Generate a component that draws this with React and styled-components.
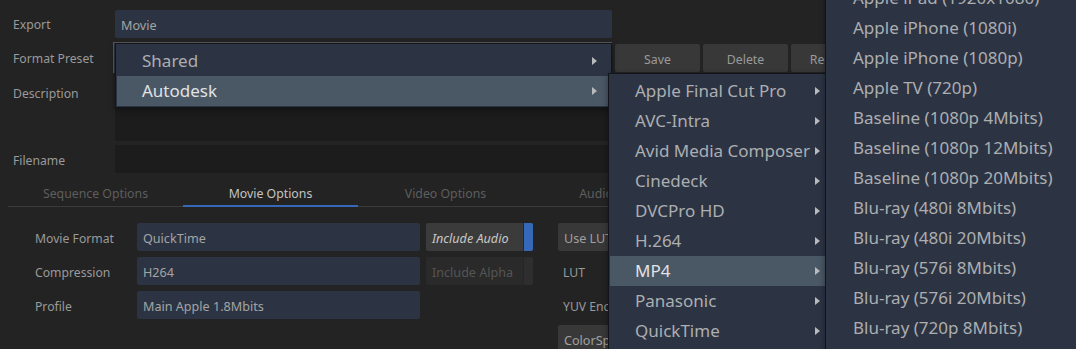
import React from "react";
import styled, { createGlobalStyle } from "styled-components";

const Global = createGlobalStyle`
  html, body { margin: 0; padding: 0; background: #232323; }
  body { font-family: "Noto Sans", "DejaVu Sans", sans-serif; }
`;

const Frame = styled.div`
  position: relative;
  width: 1076px;
  height: 349px;
  overflow: hidden;
  background: #232323;
  color: #9c9c9c;
  font-size: 12.3px;
`;

const TopForm = styled.div`
  display: grid;
  grid-template-columns: 113px 1fr;
  row-gap: 4px;
  padding: 10px 0 0 0;
`;

const Label = styled.div`
  padding-left: 13px;
  height: ${(p) => p.$h || 28}px;
  line-height: ${(p) => p.$lh || 30}px;
  color: #9a9a9a;
  font-size: 12.2px;
  white-space: nowrap;
  overflow: hidden;
`;

const Field = styled.div`
  box-sizing: border-box;
  height: ${(p) => p.$h || 28}px;
  width: ${(p) => (p.$w ? p.$w + "px" : "auto")};
  margin-left: ${(p) => p.$ml || 0}px;
  background: ${(p) => (p.$dark ? "#1c1c1c" : "#2c3443")};
  border-radius: 2px;
  padding-left: 6px;
  line-height: 31px;
  color: #a4a4a4;
  font-size: 12.6px;
  white-space: nowrap;
  overflow: hidden;
`;

const PresetRow = styled.div`
  display: flex;
  gap: 3px;
  height: 31px;
`;

const Combo = styled.div`
  box-sizing: border-box;
  width: 499px;
  height: 31px;
  border: 1px solid #5a5a5a;
  border-bottom: none;
  background: #2c3443;
`;

const Btn = styled.div`
  width: 85px;
  height: 28px;
  margin-top: 2px;
  background: #383838;
  border-radius: 2px;
  text-align: center;
  line-height: 31px;
  color: #9a9a9a;
  font-size: 12.3px;
  overflow: hidden;
`;

const Tabs = styled.div`
  display: flex;
  margin: 6px 0 0 8px;
  height: 27px;
  border-bottom: 1px solid #3a3a3a;
`;

const Tab = styled.div`
  width: 175px;
  flex: none;
  text-align: center;
  line-height: 29px;
  height: 28px;
  overflow: hidden;
  font-size: 12.3px;
  color: ${(p) => (p.$active ? "#c4c4c4" : "#5e5e5e")};
  border-bottom: 2px solid ${(p) => (p.$active ? "#3568b8" : "transparent")};
  margin-bottom: -1px;
  box-sizing: border-box;
`;

const Options = styled.div`
  display: grid;
  grid-template-columns: 102px 283px 6px 107px 25px 120px;
  grid-auto-rows: 28px;
  row-gap: 6px;
  padding: 16px 0 0 35px;
`;

const OptLabel = styled.div`
  line-height: 31px;
  color: #9a9a9a;
  font-size: 12.2px;
  white-space: nowrap;
  overflow: hidden;
  grid-column: ${(p) => p.$col || "auto"};
  padding-left: ${(p) => p.$pl || 0}px;
`;

const Toggle = styled.div`
  grid-column: 4;
  display: flex;
  background: ${(p) => (p.$disabled ? "#2a2a2a" : "#3b3b3b")};
  border-radius: 2px;
  overflow: hidden;
`;

const ToggleText = styled.div`
  flex: 1;
  padding-left: 6px;
  line-height: 31px;
  font-style: ${(p) => (p.$disabled ? "normal" : "italic")};
  color: ${(p) => (p.$disabled ? "#555" : "#c8c8c8")};
  font-size: 12.6px;
  white-space: nowrap;
`;

const ToggleLed = styled.div`
  width: 9px;
  background: ${(p) => (p.$on ? "#3568b8" : "#2e2e2e")};
  border-left: 1px solid #262626;
`;

const SideBtn = styled.div`
  grid-column: 6;
  background: #383838;
  border-radius: 2px;
  padding-left: 6px;
  line-height: 31px;
  color: #a0a0a0;
  font-size: 12.6px;
  white-space: nowrap;
  overflow: hidden;
`;

const Menu = styled.div`
  position: absolute;
  left: ${(p) => p.$left}px;
  top: ${(p) => p.$top}px;
  width: ${(p) => p.$width}px;
  box-sizing: border-box;
  background: #2c3443;
  border: 1px solid #111418;
  padding: ${(p) => p.$pad || "2px 2px 1px 1px"};
  box-shadow: 0 2px 6px rgba(0, 0, 0, 0.4);
`;

const Item = styled.div`
  position: relative;
  height: 30px;
  line-height: 30px;
  padding-left: ${(p) => p.$pl || 25}px;
  font-size: 17px;
  color: ${(p) => (p.$hl ? "#e0e2e4" : "#acaeb1")};
  background: ${(p) => (p.$hl ? "#4a5764" : "transparent")};
  white-space: nowrap;
`;

const Arrow = styled.span`
  position: absolute;
  right: ${(p) => p.$r || 8}px;
  top: 11px;
  width: 0;
  height: 0;
  border-top: 4px solid transparent;
  border-bottom: 4px solid transparent;
  border-left: 5px solid #b8babd;
`;

const menu2 = [
  "Apple Final Cut Pro",
  "AVC-Intra",
  "Avid Media Composer",
  "Cinedeck",
  "DVCPro HD",
  "H.264",
  "MP4",
  "Panasonic",
  "QuickTime",
  "Sony",
];

const menu3 = [
  "Apple iPad (1920x1080)",
  "Apple iPhone (1080i)",
  "Apple iPhone (1080p)",
  "Apple TV (720p)",
  "Baseline (1080p 4Mbits)",
  "Baseline (1080p 12Mbits)",
  "Baseline (1080p 20Mbits)",
  "Blu-ray (480i 8Mbits)",
  "Blu-ray (480i 20Mbits)",
  "Blu-ray (576i 8Mbits)",
  "Blu-ray (576i 20Mbits)",
  "Blu-ray (720p 8Mbits)",
  "Blu-ray (720p 20Mbits)",
];

export default function App() {
  return (
    <Frame>
      <Global />
      <TopForm>
        <Label>Export</Label>
        <Field $w={497} $ml={2}>Movie</Field>
        <Label $h={31} $lh={34}>Format Preset</Label>
        <PresetRow>
          <Combo />
          <Btn>Save</Btn>
          <Btn>Delete</Btn>
          <Btn>Rename</Btn>
        </PresetRow>
        <Label $h={64} $lh={34}>Description</Label>
        <Field $dark $h={64} $ml={2} />
        <Label $lh={31}>Filename</Label>
        <Field $dark $ml={2} />
      </TopForm>
      <Tabs>
        <Tab>Sequence Options</Tab>
        <Tab $active>Movie Options</Tab>
        <Tab>Video Options</Tab>
        <Tab>Audio Options</Tab>
      </Tabs>
      <Options>
        <OptLabel>Movie Format</OptLabel>
        <Field>QuickTime</Field>
        <Toggle>
          <ToggleText>Include Audio</ToggleText>
          <ToggleLed $on />
        </Toggle>
        <SideBtn>Use LUT</SideBtn>
        <OptLabel>Compression</OptLabel>
        <Field>H264</Field>
        <Toggle $disabled>
          <ToggleText $disabled>Include Alpha</ToggleText>
          <ToggleLed />
        </Toggle>
        <OptLabel $col={6} $pl={5}>LUT</OptLabel>
        <OptLabel>Profile</OptLabel>
        <Field>Main Apple 1.8Mbits</Field>
        <OptLabel $col={6} $pl={5}>YUV Encoding</OptLabel>
        <SideBtn>ColorSpace</SideBtn>
      </Options>

      <Menu $left={115} $top={43} $width={497}>
        <Item>Shared<Arrow $r={12} /></Item>
        <Item $hl>Autodesk<Arrow $r={12} /></Item>
      </Menu>
      <Menu $left={608} $top={73} $width={219} $pad="2px 0 0 1px">
        {menu2.map((t) => (
          <Item key={t} $hl={t === "MP4"}>
            {t}
            <Arrow $r={6} />
          </Item>
        ))}
      </Menu>
      <Menu $left={825} $top={-20} $width={260} $pad="2px 0 0 1px">
        {menu3.map((t) => (
          <Item key={t} $pl={26}>{t}</Item>
        ))}
      </Menu>
    </Frame>
  );
}
